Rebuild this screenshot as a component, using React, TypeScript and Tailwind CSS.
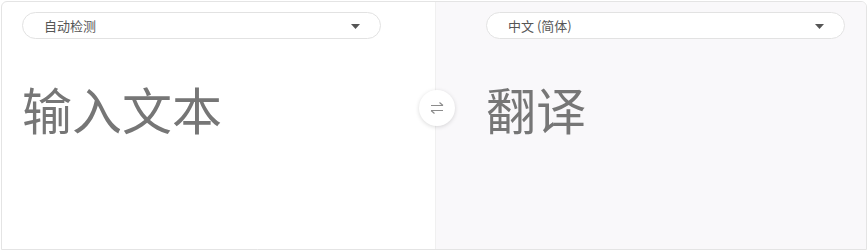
import React from "react";

const font = { fontFamily: '"Noto Sans CJK SC", "Noto Sans", sans-serif' };

function LangSelect({ label }: { label: string }) {
  return (
    <div className="flex h-[27px] w-[359px] items-center justify-between rounded-full border border-[#e2e2e2] bg-white pl-[21px] pr-[20px]">
      <span className="text-[13px] leading-none text-[#555]">{label}</span>
      <svg width="9" height="5" viewBox="0 0 9 5" className="mt-[2px]">
        <path d="M0 0h9L4.5 5z" fill="#555" />
      </svg>
    </div>
  );
}

export default function App() {
  return (
    <div className="h-[252px] w-[868px] bg-white p-px" style={font}>
      <div className="relative grid h-[249px] grid-cols-[433px_1fr] overflow-hidden rounded-t-md border border-[#e4e4e4]">
        <div className="pl-[20px] pt-[10px]">
          <LangSelect label="自动检测" />
          <div className="mt-[44px] text-[50px] leading-none text-[#767676]">
            输入文本
          </div>
        </div>
        <div className="border-l border-[#f0f0f0] bg-[#f9f8fa] pl-[50px] pt-[10px]">
          <LangSelect label="中文 (简体)" />
          <div className="mt-[44px] text-[50px] leading-none text-[#767676]">
            翻译
          </div>
        </div>
        <button className="absolute left-[417px] top-[88px] flex h-[36px] w-[36px] items-center justify-center rounded-full bg-white shadow-[0_1px_4px_rgba(0,0,0,0.15)]">
          <svg width="16" height="14" viewBox="0 0 16 14" fill="none" stroke="#8c8c8c" strokeWidth="1.2">
            <path d="M2 4.5h12M10.5 1.5 14 4.5" />
            <path d="M14 9.5H2M5.5 12.5 2 9.5" />
          </svg>
        </button>
      </div>
    </div>
  );
}
